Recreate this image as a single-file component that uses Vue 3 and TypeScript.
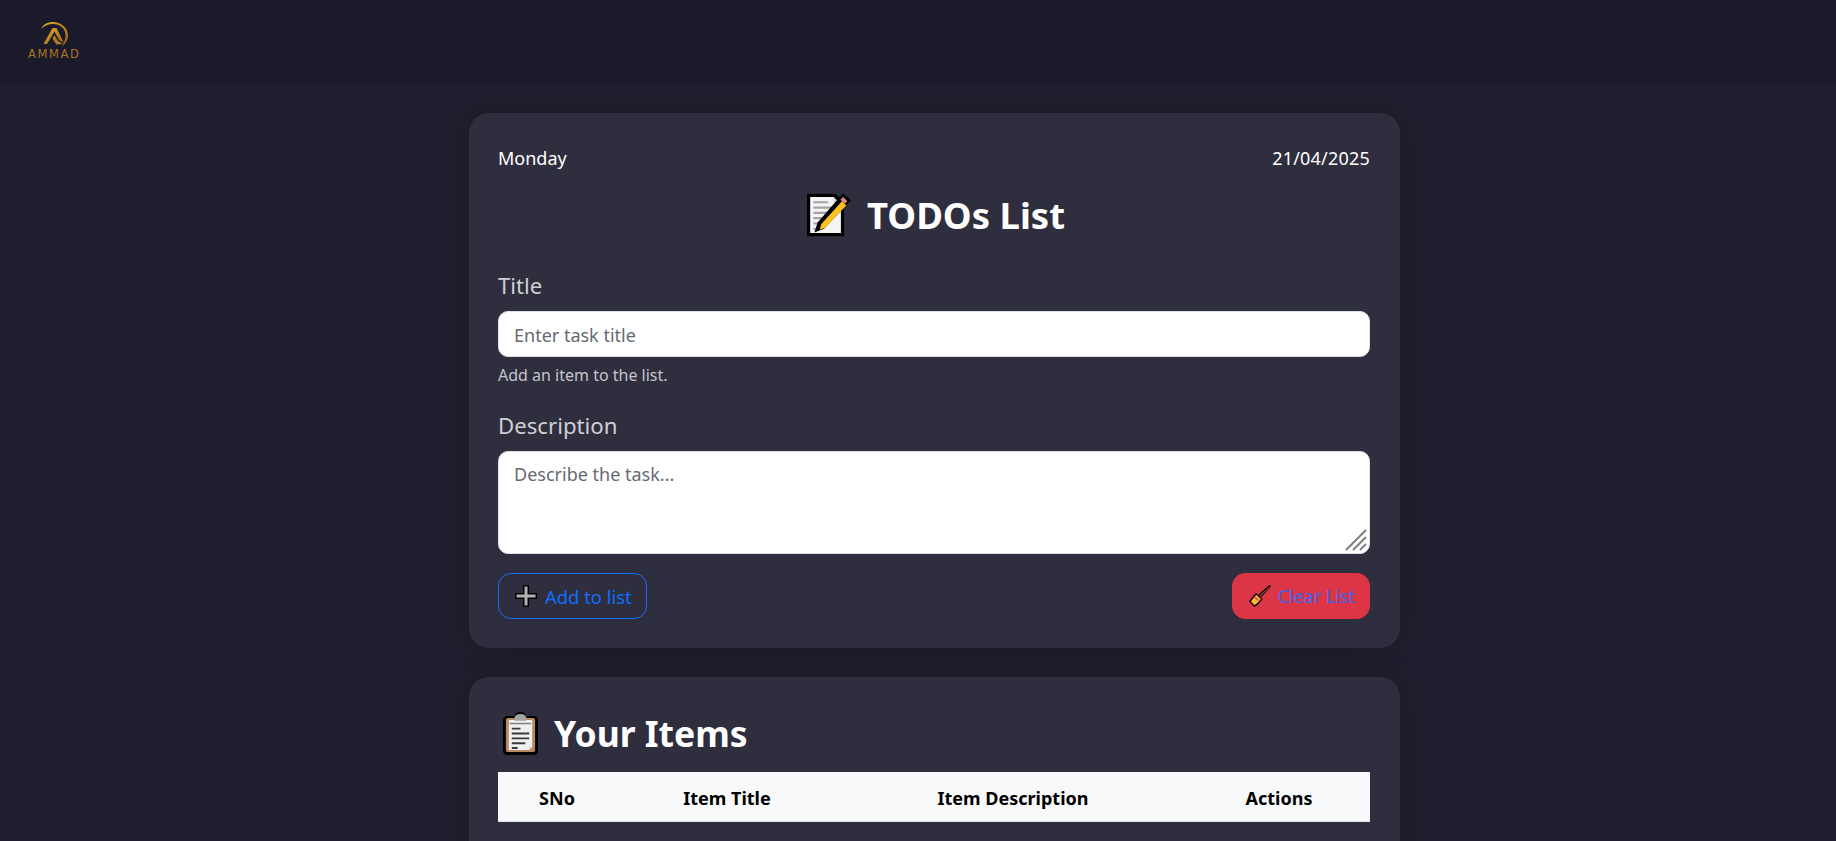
<template>
  <div class="page">
    <nav class="navbar">
      <a class="brand" href="#">
        <svg class="brand-mark" viewBox="0 0 29 26" width="29" height="26" aria-hidden="true">
          <defs>
            <linearGradient id="gold" x1="0" y1="0" x2="1" y2="1">
              <stop offset="0" stop-color="#e6ab28" />
              <stop offset="1" stop-color="#96601a" />
            </linearGradient>
          </defs>
          <path d="M1 8C3 3.500 7.500 1 13 1c8 0 15 6 15 13 0 5-2.500 9-6.500 11.500 2.500-3.500 4-7 4-11C25.500 7.500 20 3 13 3 8.500 3 4.500 4.500 1 8z" fill="url(#gold)" />
          <path d="M3.500 23 12.500 7h4l7.500 15-5-3-4.500-8.500L7 23z" fill="url(#gold)" />
          <path d="M12.500 17.500 14.500 14l3 5.500 5 3.500-6 .5z" fill="#b57c1d" />
        </svg>
        <span class="brand-name">AMMAD</span>
      </a>
    </nav>

    <main class="content">
      <section class="card">
        <div class="date-row">
          <span>{{ day }}</span>
          <span class="date">{{ date }}</span>
        </div>

        <h1 class="heading heading-center">
          <svg class="emoji" viewBox="2 1.500 41.500 41" width="44" height="44" aria-hidden="true">
            <path d="M2 2h27l8 8v32H2z" fill="#000" />
            <path d="M5 5h22l7 7v27H5z" fill="#f4f4f4" />
            <path d="M27 5l7 7h-7z" fill="#d6d6d6" />
            <path d="M8 9h14v2H8zM8 14h22v2H8zM8 19h22v2H8zM8 24h18v2H8zM8 29h13v2H8zM8 34h8v2H8z" fill="#a3a3a3" />
            <path d="M36 1.500 43.500 8 18 35l-9 3.500L12 29z" fill="#000" />
            <path d="M35 9l4 4-20 21-5 2 1.500-5.500z" fill="#fcc21b" />
            <path d="M36 5l4 4-2.500 2.500-4-4z" fill="#e58a7c" />
          </svg>
          <span>TODOs List</span>
        </h1>

        <form class="todo-form" @submit.prevent>
          <div class="field">
            <label for="title">Title</label>
            <input id="title" v-model="title" type="text" placeholder="Enter task title" />
            <small>Add an item to the list.</small>
          </div>

          <div class="field field-desc">
            <label for="description">Description</label>
            <div class="textarea-wrap">
              <textarea id="description" v-model="description" placeholder="Describe the task..."></textarea>
              <svg class="grip" viewBox="0 0 22 22" width="22" height="22" aria-hidden="true">
                <path d="M1 21 21 1M8 21 21 8M15 21l6-6" fill="none" stroke="#808080" stroke-width="2" />
              </svg>
            </div>
          </div>

          <div class="actions">
            <button class="btn btn-add" type="submit">
              <svg viewBox="0 0 22 22" width="22" height="22" aria-hidden="true">
                <path d="M8 0h6v8h8v6h-8v8H8v-8H0V8h8z" fill="#000" />
                <path d="M9.500 1.500h3v8h8v3h-8v8h-3v-8h-8v-3h8z" fill="#b2b2b2" />
              </svg>
              Add to list
            </button>
            <button class="btn btn-clear" type="button">
              <svg viewBox="0 0 22 22" width="22" height="22" aria-hidden="true">
                <path d="M20.500 0 22 1.500 12.500 12 9.500 9.500z" fill="#000" />
                <path d="M20.500 1.400 21 2 12 11 11 10z" fill="#8a5a2b" />
                <path d="M7 8 13.500 14 10 18.500 5.500 22 0 16.500 3.500 12z" fill="#000" />
                <path d="M7.200 9.800 12 14.300 9 17.500 5.500 20.200 1.800 16.500 4.500 13z" fill="#f6b73c" />
                <path d="M6 11.300 10.500 15.300 9.500 16.500 4.800 12.500z" fill="#e2574c" />
              </svg>
              Clear List
            </button>
          </div>
        </form>
      </section>

      <section class="card card-items">
        <h2 class="heading heading-items">
          <svg class="emoji" viewBox="0 0 36 44" width="35" height="43" aria-hidden="true">
            <path d="M4 4h8c1-3 3-4 6-4s5 1 6 4h8c2 0 4 2 4 4v32c0 2-2 4-4 4H4c-2 0-4-2-4-4V8c0-2 2-4 4-4z" fill="#000" />
            <rect x="3" y="6" width="30" height="35" rx="2" fill="#b98a5e" />
            <path d="M6 8h24v28l-3 3H6z" fill="#f0f0f0" />
            <path d="M27 39l3-3h-3z" fill="#cfcfcf" />
            <path d="M12 5c1-2 3-3 6-3s5 1 6 3v4H12z" fill="#a5a5a5" />
            <path d="M7 11h22v1.500H7z" fill="#7d7d7d" />
            <path d="M9 16h9v2H9zM9 21h18v2H9zM9 26h18v2H9zM9 31h14v2H9zM9 36h6v2H9z" fill="#3b3b3b" />
          </svg>
          <span>Your Items</span>
        </h2>

        <table class="items">
          <colgroup>
            <col v-for="col in columns" :key="col.label" :style="{ width: col.width + 'px' }" />
          </colgroup>
          <thead>
            <tr>
              <th v-for="col in columns" :key="col.label">{{ col.label }}</th>
            </tr>
          </thead>
        </table>
      </section>
    </main>
  </div>
</template>

<script setup lang="ts">
import { ref } from 'vue'

const day = 'Monday'
const date = '21/04/2025'

const title = ref('')
const description = ref('')

const columns = [
  { label: 'SNo', width: 118 },
  { label: 'Item Title', width: 222 },
  { label: 'Item Description', width: 350 },
  { label: 'Actions', width: 182 }
]
</script>

<style>
html,
body {
  margin: 0;
  height: 841px;
  overflow: hidden;
  background: #1f1f2f;
}
</style>

<style scoped>
.page {
  min-height: 841px;
  background: #1f1f2f;
  color: #fff;
  font-family: "Noto Sans", "Open Sans", sans-serif;
}

.navbar {
  height: 84px;
  background: #1a1a2b;
  box-sizing: border-box;
  padding: 21px 0 0 28px;
}

.brand {
  display: inline-flex;
  flex-direction: column;
  align-items: center;
  text-decoration: none;
}

.brand-name {
  font-family: "DejaVu Sans", sans-serif;
  font-size: 11.500px;
  line-height: 11px;
  letter-spacing: 1.600px;
  color: #a8741c;
  margin-top: 2px;
}

.content {
  width: 931px;
  margin: 0 auto;
  padding: 29px 0 0 33px;
  display: flex;
  flex-direction: column;
  gap: 29px;
}

.card {
  background: #2f2e3e;
  border-radius: 20px;
  padding: 30px 30px 29px 29px;
  box-shadow: 0 0 30px rgba(0, 0, 0, 0.2);
}

.card-items {
  padding-top: 32px;
  padding-bottom: 60px;
}

.date-row {
  display: flex;
  justify-content: space-between;
  font-size: 18px;
  line-height: 31px;
}

.date {
  letter-spacing: 0.200px;
}

.heading {
  display: flex;
  align-items: center;
  gap: 16px;
  margin: 0;
  font-size: 36px;
  font-weight: 700;
  line-height: 48px;
}

.heading-center {
  font-size: 36.500px;
  justify-content: center;
  margin: 17px 0 32px;
  padding-left: 4px;
}

.heading-items {
  font-size: 35.500px;
  padding-left: 5px;
}

.emoji {
  flex: none;
}

.field {
  display: flex;
  flex-direction: column;
}

.field-desc {
  margin-top: 24px;
}

.field label {
  font-size: 22.200px;
  line-height: 30px;
  color: #cfcfd4;
  margin-bottom: 10px;
}

.field input,
.field textarea {
  box-sizing: border-box;
  width: 100%;
  border: 1px solid #dee2e6;
  border-radius: 10px;
  background: #fff;
  padding: 9px 15px 7px;
  font-family: inherit;
  font-size: 18px;
  line-height: 27px;
  color: #212529;
  outline: none;
}

.field input {
  height: 46px;
  padding-top: 9px;
  padding-bottom: 7px;
}

.field textarea {
  display: block;
  height: 103px;
  resize: vertical;
}

.field textarea::-webkit-resizer {
  display: none;
}

.field input::placeholder,
.field textarea::placeholder {
  color: #666a70;
  opacity: 1;
}

.textarea-wrap {
  position: relative;
}

.grip {
  position: absolute;
  right: 3px;
  bottom: 3px;
  pointer-events: none;
}

.field small {
  font-size: 16px;
  line-height: 24px;
  color: #c4c4ca;
  margin-top: 6px;
}

.actions {
  display: flex;
  justify-content: space-between;
  margin-top: 19px;
}

.btn {
  display: inline-flex;
  align-items: center;
  gap: 8px;
  box-sizing: border-box;
  height: 46px;
  border-radius: 13px;
  font-family: inherit;
  font-size: 18.400px;
  color: #0d6efd;
  background: transparent;
  border: 1px solid #0d6efd;
}

.btn-add {
  padding: 0 14px 0 16px;
}

.btn-clear {
  gap: 6px;
  padding: 0 14px 0 16px;
  font-size: 18px;
  background: #dc3545;
  border-color: #dc3545;
  color: #3a67f0;
}

.items {
  width: 872px;
  table-layout: fixed;
  border-collapse: collapse;
  margin-top: 15px;
}

.items th {
  height: 47px;
  background: #f8f9fa;
  border-bottom: 1px solid #dee2e6;
  color: #000;
  font-size: 18px;
  font-weight: 700;
  text-align: center;
  padding: 2px 0 0;
}
</style>
